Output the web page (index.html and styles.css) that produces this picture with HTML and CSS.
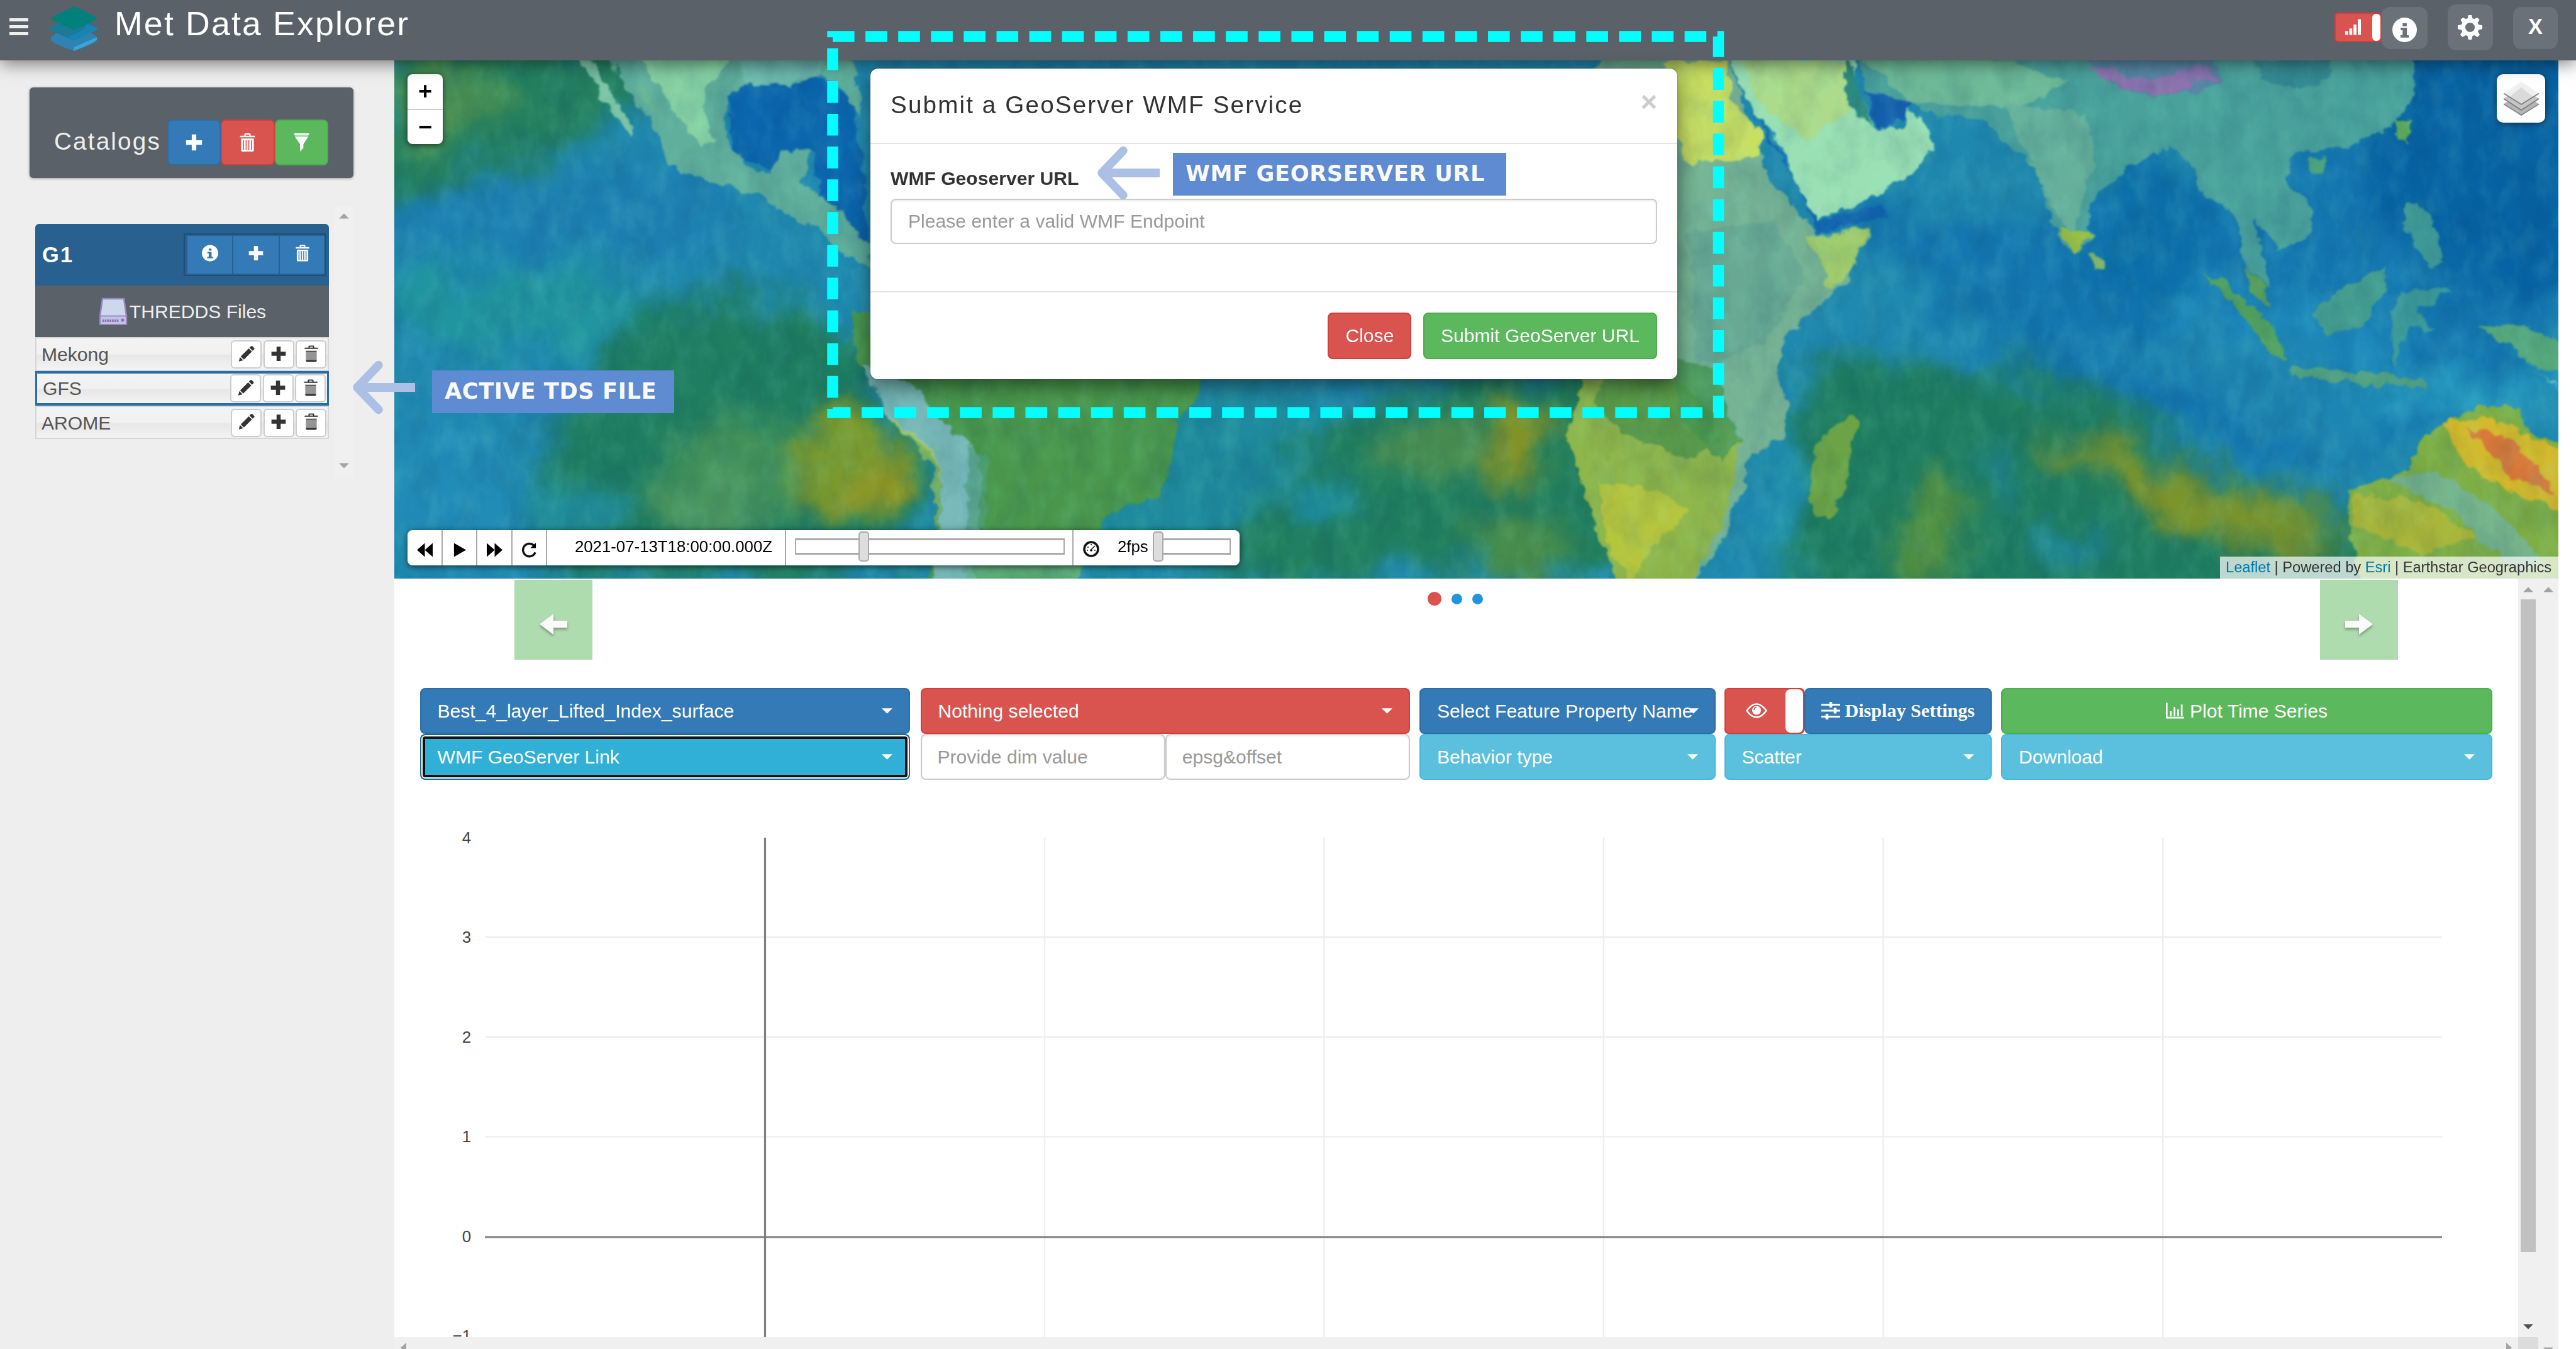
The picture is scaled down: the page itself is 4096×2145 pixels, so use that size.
FILE: index.html
```html
<!DOCTYPE html>
<html lang="en">
<head>
<meta charset="utf-8">
<title>Met Data Explorer</title>
<link rel="stylesheet" href="styles.css">
</head>
<body>
<svg class="sprite" width="0" height="0">
  <symbol id="i-plus" viewBox="0 0 16 16"><path d="M6 1h4v5h5v4h-5v5H6v-5H1V6h5z"/></symbol>
  <symbol id="i-trash" viewBox="0 0 16 16"><path fill-rule="evenodd" d="M5.2 2V.9Q5.200 0 6 0h4q.8 0 .8.900V2H14q.6 0 .6.600V3.500H1.400V2.600Q1.400 2 2 2zM6.400 2h3.200V1.100H6.400zM2.400 4.600h11.200V15q0 1-1 1H3.400q-1 0-1-1zM4.100 6v8.600h.9V6zm2.300 0v8.600h.9V6zm2.300 0v8.600h.9V6zm2.300 0v8.600h.9V6z"/></symbol>
  <symbol id="i-bin" viewBox="0 0 16 16"><path fill-rule="evenodd" d="M5.200 2V.9Q5.200 0 6 0h4q.8 0 .8.900V2H14q.6 0 .6.600V3.300H1.400V2.600Q1.400 2 2 2zM6.400 2h3.200V1.100H6.400z"/><path d="M2.700 5h10.600v1H2.700zM2.700 14h10.600v.8q0 1.200-1.100 1.200H3.800q-1.100 0-1.100-1.200z"/><path opacity=".52" d="M2.700 6h10.600v8H2.700z"/></symbol>
  <symbol id="i-filter" viewBox="0 0 16 16"><path d="M1.500 0h13v1.200h-13z"/><path opacity=".5" d="M1.700 1.200h12.600L13.600 3H2.400z"/><path d="M2.200 3h11.600L9.600 9.500V13L6.600 16V9.500z"/></symbol>
  <symbol id="i-info" viewBox="0 0 16 16"><path fill-rule="evenodd" d="M8 0a8 8 0 1 1 0 16A8 8 0 0 1 8 0zM6.700 3.600v2h2.700v-2zM5.400 6.700v1.500h1.300v3.300H5.300V13h5.500v-1.500H9.500V6.700z"/></symbol>
  <symbol id="i-pencil" viewBox="0 0 16 16"><path d="M12.300.6q.7-.7 1.400 0l1.700 1.700q.7.700 0 1.400L14 5.100 10.900 2zM10.200 2.700l3.100 3.100-7.900 7.900-3.100-3.100zM1.600 11.300l3.100 3.100L.5 15.500z"/></symbol>
  <symbol id="i-gear" viewBox="0 0 16 16"><path fill-rule="evenodd" d="M6.900 0h2.200l.4 2.100 1.300.5L12.600 1.500l1.600 1.600-1.200 1.900.5 1.200 2.500.5v2.400l-2.400.5-.5 1.200 1.300 2-1.600 1.600-2-1.300-1.200.5L9.100 16H6.900l-.5-2.400-1.200-.5-2 1.300-1.600-1.600 1.300-2-.5-1.200L0 9.100V6.700l2.500-.5.500-1.200-1.200-1.900 1.600-1.600 1.800 1.100 1.300-.5zM8 4.900a3.100 3.100 0 1 0 0 6.200 3.100 3.100 0 0 0 0-6.200z"/></symbol>
  <symbol id="i-signal" viewBox="0 0 16 16"><path d="M0 12h3v4H0zM4.200 9.500h3V16h-3zM8.500 5.500h3V16h-3zM12.800 0H16v16h-3.200z"/></symbol>
  <symbol id="i-caret" viewBox="0 0 16 8"><path d="M0 0h16L8 8z"/></symbol>
  <symbol id="i-arrow" viewBox="0 0 44 33"><path d="M0 16.500L22 0v11h22v11H22v11z"/></symbol>
  <symbol id="i-callout" viewBox="0 0 101 86"><path d="M14 43H101" fill="none" stroke="#abc0e4" stroke-width="14"/><path d="M43 7.500L9 43l34 35.500" fill="none" stroke="#abc0e4" stroke-width="13.500" stroke-linecap="round" stroke-linejoin="round"/></symbol>
</svg>

<header class="topbar">
  <div class="burger"><span></span><span></span><span></span></div>
  <svg class="logo" viewBox="0 0 80 72">
    <path d="M3 50q0-2 37-25 37 23 37 25v5q-3 5-37 17Q6 60 3 55z" fill="#2e83b3"/>
    <path d="M77 50v4Q70 60 40 72v-6z" fill="#37a6dc"/>
    <path d="M0 36q2-3 40-22 37 19 39 22-2 3-39 19Q3 40 0 36z" fill="#1a7a97"/>
    <path d="M60 28q18 6 19 8-1 3-39 19l-10-6q32-10 30-21z" fill="#158abd" opacity=".75"/>
    <path d="M3 19Q5 16 40 0q34 15 37 19-2 5-37 19Q6 24 3 19z" fill="#02807c"/>
  </svg>
  <h1 class="brand">Met Data Explorer</h1>
  <div class="tools">
    <div class="toggle toggle-sm"><svg class="ic-signal"><use href="#i-signal"/></svg><i></i></div>
    <button class="tool"><svg class="ic-38 low"><use href="#i-info"/></svg></button>
    <button class="tool tool-gear"><svg class="ic-38"><use href="#i-gear"/></svg></button>
    <button class="tool tool-x">X</button>
  </div>
</header>

<div class="layout">
  <aside class="sidebar">
    <div class="catalogs">
      <span>Catalogs</span>
      <div class="cat-buttons">
        <button class="sq primary"><svg><use href="#i-plus"/></svg></button><button class="sq danger"><svg><use href="#i-trash"/></svg></button><button class="sq success"><svg><use href="#i-filter"/></svg></button>
      </div>
    </div>
    <div class="tree">
      <div class="group">
        <div class="group-head"><b>G1</b>
          <div class="group-buttons"><button><svg><use href="#i-info"/></svg></button><button><svg><use href="#i-plus"/></svg></button><button><svg><use href="#i-trash"/></svg></button></div>
        </div>
        <div class="group-sub">
          <svg class="drive" viewBox="0 0 46 44"><path d="M6 2h34l4 27v14H2V29z" fill="#ccd8ee" stroke="#9a85bd" stroke-width="2.500"/><path d="M2 29.500h42" stroke="#9a85bd" stroke-width="2"/><path d="M3.500 31h39v11h-39z" fill="#bfc3e6"/><path d="M6 37h26" stroke="#8a6fae" stroke-width="4" stroke-dasharray="2.500 1.300"/><circle cx="38" cy="36" r="2.500" fill="#8a6fae"/></svg>
          <span>THREDDS Files</span>
        </div>
        <div class="file"><span>Mekong</span><button><svg><use href="#i-pencil"/></svg></button><button><svg><use href="#i-plus"/></svg></button><button><svg><use href="#i-bin"/></svg></button></div>
        <div class="file active"><span>GFS</span><button><svg><use href="#i-pencil"/></svg></button><button><svg><use href="#i-plus"/></svg></button><button><svg><use href="#i-bin"/></svg></button></div>
        <div class="file"><span>AROME</span><button><svg><use href="#i-pencil"/></svg></button><button><svg><use href="#i-plus"/></svg></button><button><svg><use href="#i-bin"/></svg></button></div>
      </div>
      <div class="vbar"><svg class="up"><use href="#i-caret"/></svg><svg><use href="#i-caret"/></svg></div>
    </div>
  </aside>

  <main class="content">
    <section class="map">
      <svg class="world" viewBox="240 37 1317.500 315.500" preserveAspectRatio="none">
        <defs>
          <filter id="b10" color-interpolation-filters="sRGB" x="-50%" y="-50%" width="200%" height="200%"><feGaussianBlur stdDeviation="8"/></filter>
          <filter id="warp" color-interpolation-filters="sRGB" filterUnits="userSpaceOnUse" x="220" y="20" width="1360" height="350"><feTurbulence type="fractalNoise" baseFrequency="0.022" numOctaves="6" seed="7" result="n"/><feDisplacementMap in="SourceGraphic" in2="n" scale="44" xChannelSelector="R" yChannelSelector="G"/></filter>
          <filter id="coast" color-interpolation-filters="sRGB" filterUnits="userSpaceOnUse" x="220" y="20" width="1360" height="350"><feTurbulence type="fractalNoise" baseFrequency="0.120" numOctaves="4" seed="3" result="n"/><feDisplacementMap in="SourceGraphic" in2="n" scale="8" xChannelSelector="R" yChannelSelector="G"/><feGaussianBlur stdDeviation="0.700"/></filter>
          <filter id="grain" color-interpolation-filters="sRGB" filterUnits="userSpaceOnUse" x="240" y="37" width="1318" height="316"><feTurbulence type="fractalNoise" baseFrequency="0.090 0.050" numOctaves="5" seed="12"/><feColorMatrix values="0 0 0 0 .6  0 0 0 0 1  0 0 0 0 .85  1.500 0 0 0 -0.600"/></filter>
          <filter id="grain2" color-interpolation-filters="sRGB" filterUnits="userSpaceOnUse" x="240" y="37" width="1318" height="316"><feTurbulence type="fractalNoise" baseFrequency="0.060 0.040" numOctaves="5" seed="31"/><feColorMatrix values="0 0 0 0 0  0 0 0 0 0.200  0 0 0 0 0.350  0 1.500 0 0 -0.600"/></filter>
        </defs>
        <rect x="220" y="17" width="1360" height="356" fill="#1c86a8"/>
        <g filter="url(#warp)">
          <rect x="200" y="0" width="1400" height="400" fill="#2089b0"/>
          <g filter="url(#b10)">
            <path d="M230 20H400L385 70 330 95 290 105 230 130z" fill="#247f5f"/>
            <ellipse cx="270" cy="60" rx="32" ry="24" fill="#4c9152"/>
            <ellipse cx="340" cy="130" rx="110" ry="28" fill="#1d80b2"/>
            <ellipse cx="320" cy="190" rx="80" ry="24" fill="#21949f"/>
            <path d="M400 185L440 175 520 200 570 290 540 352 330 352 330 260z" fill="#1f7d60"/>
            <ellipse cx="270" cy="300" rx="38" ry="45" fill="#228cb8"/>
            <ellipse cx="350" cy="310" rx="30" ry="20" fill="#218d9a"/>
            <ellipse cx="455" cy="280" rx="50" ry="32" fill="#43915a"/>
            <ellipse cx="430" cy="312" rx="38" ry="18" fill="#4b9560"/>
            <ellipse cx="520" cy="285" rx="32" ry="38" fill="#7b992e"/>
            <ellipse cx="532" cy="298" rx="14" ry="14" fill="#949624"/>
            <path d="M560 352l20-60 140-60 90 10 30 110z" fill="#1f8a9d"/>
            <path d="M740 352l40-80 90-40 110-10 20 132z" fill="#217e5e"/>
            <ellipse cx="880" cy="270" rx="40" ry="18" fill="#4b8e50"/>
            <ellipse cx="926" cy="268" rx="18" ry="25" fill="#859225"/>
            <ellipse cx="800" cy="300" rx="28" ry="16" fill="#1e8d9c"/>
            <ellipse cx="925" cy="335" rx="35" ry="20" fill="#4d8f4a"/>
            <path d="M1100 110l250 0 210-90 20 160-80 80-100 30-160-50z" fill="#1477b0"/>
            <path d="M1440 20h140v150l-60 20-70-50z" fill="#0863a4"/>
            <ellipse cx="1200" cy="110" rx="60" ry="30" fill="#1f87ae"/>
            <ellipse cx="1310" cy="150" rx="35" ry="55" fill="#0d70aa"/>
            <ellipse cx="1390" cy="205" rx="80" ry="30" fill="#1d88bc"/>
            <path d="M1100 215l100 5 70 15 60 45 110 35 10 62H1090z" fill="#1f7d60"/>
            <path d="M1250 212l70 20 110 55 20-20-50-60z" fill="#1e85b1"/>
            <path d="M1240 260l70 22 115 36-20 16-85-8z" fill="#7d942b"/>
            <ellipse cx="1175" cy="325" rx="22" ry="35" fill="#529143"/>
            <ellipse cx="1217" cy="290" rx="7" ry="18" fill="#20879c"/>
            <ellipse cx="1260" cy="335" rx="20" ry="12" fill="#21899a"/>
            <ellipse cx="1085" cy="310" rx="14" ry="50" fill="#2190ab"/>
            <ellipse cx="1500" cy="240" rx="70" ry="16" fill="#2598c0"/>
          </g>
        </g>
        <g filter="url(#coast)">
          <g transform="translate(236.500 36.800) scale(.352 .2045)">
            <path d="M590 100L640 50 750 50 800 120 820 300 830 560 760 500 740 330 730 260 680 270 660 330 600 280z" fill="#0c66ae"/>
            <path d="M330 0L350 60 375 130 420 225 428 205 400 150 368 60 352 0z" fill="#7cc4a6"/>
            <path d="M375 -20L440 150 470 230 480 310 540 350 600 385 640 405 700 470 745 500 770 560 830 620 835 560 775 440 745 400 715 370 730 265 680 270 660 330 640 345 600 270 580 200 590 110 620 70 700 70 750 40 790 100 812 170 818 120 800 -20z" fill="#60ae9c"/>
            <path d="M600 -20L760 -20 745 40 690 68 620 68z" fill="#6fb9ae"/>
            <path d="M430 -20L480 120 520 210 545 270 560 240 540 140 560 60 600 -20z" fill="#8fd8a6" opacity=".85"/>
            <path d="M430 60L470 170 500 230 450 130z" fill="#9abe3c" opacity=".5"/>
            <path d="M800 750L805 880 840 960 870 1080 940 1180 952 1250 945 1380 935 1560 1180 1560 1210 1500 1240 1350 1330 1300 1350 1240 1365 1060 1400 1000 1410 920 1400 700z" fill="#4a974c"/>
            <path d="M820 900L860 1060 940 1170 955 1260 945 1560 1010 1560 1025 1280 1020 1170 960 1080 900 960z" fill="#78b8b8"/>
            <path d="M990 1470L1000 1560 1190 1560 1215 1440 1090 1430z" fill="#62b08b" opacity=".65"/>
            <path d="M1000 1150L1040 1190 1030 1400 1000 1400z" fill="#4f9f7c" opacity=".7"/>
            <path d="M860 1050L945 1165 955 1250 948 1400 940 1200z" fill="#c6d648" opacity=".5"/>
          </g>
          <g transform="translate(775.300 36.800) scale(.5055 .2179)">
            <path d="M400 -40L545 -40 560 90 590 300 610 370 640 440 655 490 715 465 715 500 690 620 640 720 615 790 605 880 620 960 615 1060 565 1120 570 1200 555 1240 545 1330 500 1480 415 1480 385 1280 380 1150 355 1060 370 890 380 700 300 500z" fill="#76b294"/>
            <path d="M470 0L545 0 555 120 590 210 580 270 500 290 480 200z" fill="#c9df62"/>
            <path d="M370 890L480 880 520 960 560 1060 550 1240 500 1480 415 1480 385 1280 355 1060z" fill="#8fb64b"/>
            <path d="M400 880L480 880 520 960 540 1060 500 1120 420 1040 385 960z" fill="#5a9a48"/>
            <path d="M480 840L530 860 560 1060 540 1130 490 1000z" fill="#469550" opacity=".8"/>
            <path d="M390 1180L460 1200 500 1260 460 1350 430 1446 405 1380z" fill="#c4cc39" opacity=".7"/>
            <path d="M500 480L600 450 640 600 590 800 510 850z" fill="#5b9f92" opacity=".5"/>
            <path d="M640 500L715 465 700 580 665 650 660 560z" fill="#a2cc6c"/>
            <path d="M545 -40L565 100 605 210 650 450 720 385 770 320 797 230 765 130 760 185 722 190 700 60 700 -40z" fill="#9be0b4"/>
            <path d="M560 0L690 0 700 130 640 230 590 130z" fill="#b2d97f" opacity=".8"/>
            <path d="M690 -20L720 190 690 110z" fill="#2c8b80"/>
            <path d="M565 100L605 230 648 440 655 485 740 440 735 400 655 450 615 290 580 150z" fill="#1265b0"/>
            <path d="M700 -40L715 90 770 120 800 165 855 160 880 230 915 300 930 400 950 510 965 545 985 500 985 380 1040 290 1060 250 1090 250 1110 310 1120 380 1145 400 1160 450 1167 560 1200 640 1180 440 1213 535 1250 480 1250 420 1220 330 1230 260 1290 240 1340 200 1372 100 1378 -40z" fill="#4aa19c"/>
            <path d="M700 -20L880 0 960 60 900 130 770 120z" fill="#83c896" opacity=".65"/>
            <path d="M880 120L980 150 990 290 960 500 930 380z" fill="#70b69b" opacity=".75"/>
            <path d="M715 90L770 120 760 165 725 190 718 130z" fill="#1660b0"/>
            <path d="M970 -20L1130 -20 1145 70 1100 90 1060 100 1010 70z" fill="#5a80a6" opacity=".85"/>
            <path d="M975 20L1015 70 1060 98 1100 85 1110 50 1142 65 1120 10 1085 40 1050 55 1010 25z" fill="#b168b8" opacity=".6"/>
            <path d="M1180 0L1280 0 1260 70 1200 70z" fill="#22778b" opacity=".5"/>
            <path d="M985 540L1000 560 998 590 985 585z" fill="#82b768"/>
            <path d="M945 470L965 545 985 480z" fill="#98be46"/>
            <path d="M1120 590L1145 620 1200 730 1220 840 1200 820 1165 710z" fill="#52a15f"/>
            <path d="M1170 570L1195 630 1200 690 1178 650z" fill="#5ba35c"/>
            <path d="M1250 710L1280 650 1335 580 1340 640 1310 740 1270 770z" fill="#459e90"/>
            <path d="M1222 855L1300 870 1390 895 1385 915 1290 900 1225 880z" fill="#5ca778" opacity=".85"/>
            <path d="M1365 390L1395 430 1410 560 1395 590 1375 520 1360 460z" fill="#4ca592" opacity=".8"/>
            <path d="M1350 160L1370 170 1365 230 1352 220z" fill="#5fae5a"/>
            <path d="M1248 270L1268 265 1265 310 1250 320z" fill="#4aa07a"/>
            <path d="M1360 650L1420 640 1380 700 1400 760 1370 740 1350 860 1345 700z" fill="#45a092" opacity=".8"/>
            <path d="M1450 745L1500 740 1560 800 1560 880 1520 860 1480 790z" fill="#56a77c"/>
            <path d="M650 1080L695 985 706 1010 690 1180 670 1285 648 1260z" fill="#6ba346"/>
            <path d="M1295 1200L1365 1150 1385 1050 1420 1010 1450 965 1500 970 1510 1040 1560 1080 1560 1460 1310 1460 1295 1300z" fill="#7fae45"/>
            <path d="M1340 1170L1400 1150 1470 1250 1530 1400 1500 1440 1420 1260z" fill="#75b49c" opacity=".8"/>
            <path d="M1300 1210L1380 1230 1450 1330 1380 1380 1300 1300z" fill="#a9b63a"/>
            <path d="M1410 1010L1470 1000 1520 1060 1560 1100 1560 1260 1480 1200 1430 1120z" fill="#d3b92c"/>
            <path d="M1435 1030L1480 1050 1520 1130 1545 1220 1490 1160z" fill="#d9793a"/>
            <path d="M1515 870L1540 900 1552 920 1530 890z" fill="#9cd3d0"/>
          </g>
        </g>
        <rect x="240" y="37" width="1318" height="316" filter="url(#grain)" opacity=".15"/>
        <rect x="240" y="37" width="1318" height="316" filter="url(#grain2)" opacity=".17"/>
      </svg>
      <div class="zoom"><b>+</b><b>−</b></div>
      <div class="layers"><svg viewBox="0 0 56 54"><path d="M0 35.500L28 16l28 19.500L28 54z" fill="#b5b5b5"/><path d="M0 35.500L28 53l28-17.500" fill="none" stroke="#858585" stroke-width="1.500"/><path d="M0 27L28 8l28 19-28 18.500z" fill="#c6c6c6"/><path d="M0 27l28 18 28-18" fill="none" stroke="#7c7c7c" stroke-width="1.500"/><path d="M0 18.500L28 0l28 18.500-28 18z" fill="#f0f0f0"/><path d="M9 24L28 9l19 15-19 12.500z" fill="#dadada"/><path d="M0 18.500L28 36l28-17.500" fill="none" stroke="#7c7c7c" stroke-width="1.500"/></svg></div>
      <div class="player">
        <span class="pb"><svg viewBox="0 0 26 23"><path d="M13 0v23L0 11.500zM26 0v23L13 11.500z"/></svg></span>
        <span class="pb"><svg viewBox="0 0 26 23"><path d="M4 0l20 11.500L4 23z"/></svg></span>
        <span class="pb"><svg viewBox="0 0 26 23"><path d="M0 0l13 11.500L0 23zM13 0l13 11.500L13 23z"/></svg></span>
        <span class="pb"><svg viewBox="0 0 26 26"><path d="M20.500 5.500A10.500 10.500 0 1 0 23 17" fill="none" stroke="#111" stroke-width="3.500"/><path d="M24 1v9h-9z"/></svg></span>
        <span class="stamp">2021-07-13T18:00:00.000Z</span>
        <span class="seek"><span class="track"><i></i></span></span>
        <span class="speed"><svg viewBox="0 0 26 26"><circle cx="13" cy="13" r="11" fill="none" stroke="#111" stroke-width="3.500"/><circle cx="13" cy="15" r="1.800"/><path d="M12 15l7-7" stroke="#111" stroke-width="1.500"/><path d="M7 10h2M12 6h2M6 15h2M18 15h2" stroke="#111" stroke-width="1.500"/></svg><em>2fps</em><span class="track short"><i></i></span></span>
      </div>
      <div class="credit"><a>Leaflet</a> | Powered by <a>Esri</a> | Earthstar Geographics</div>
    </section>

    <section class="panel">
      <div class="pane">
        <nav class="slides">
          <button><svg><use href="#i-arrow"/></svg></button>
          <div class="dots"><i class="on"></i><i></i><i></i></div>
          <button><svg class="flip"><use href="#i-arrow"/></svg></button>
        </nav>
        <div class="controls">
          <div class="btn primary">Best_4_layer_Lifted_Index_surface<svg class="caret"><use href="#i-caret"/></svg></div>
          <div class="btn danger">Nothing selected<svg class="caret"><use href="#i-caret"/></svg></div>
          <div class="btn primary">Select Feature Property Name<svg class="caret over"><use href="#i-caret"/></svg></div>
          <div class="pair">
            <div class="toggle toggle-lg"><svg class="eye" viewBox="0 0 34 24"><path d="M1.500 12Q9 1.500 17 1.500T32.500 12Q25 22.500 17 22.500T1.500 12z" fill="none" stroke="#fff" stroke-width="2.600"/><circle cx="17" cy="11.500" r="7" fill="#fff"/><path d="M13 11a4.500 4.500 0 0 1 4-4.500" fill="none" stroke="#d9534f" stroke-width="1.500"/></svg><i></i></div>
            <div class="btn primary serif"><svg class="sliders" viewBox="0 0 30 28"><path d="M0 4.500h30M0 14h30M0 23.500h30" stroke="#fff" stroke-width="3.200"/><path d="M15 0v9M22 9.500v9M9 19v9" stroke="#fff" stroke-width="4.500"/></svg>Display Settings</div>
          </div>
          <div class="btn success center"><svg class="chart-ic" viewBox="0 0 30 26"><path d="M1.300 0v24.500H30M8 22v-8M14 22V7M20 22V11M26 22V3" fill="none" stroke="#fff" stroke-width="2.800"/></svg>Plot Time Series</div>

          <div class="btn focus">WMF GeoServer Link<svg class="caret"><use href="#i-caret"/></svg></div>
          <div class="pair"><div class="field">Provide dim value</div><div class="field">epsg&amp;offset</div></div>
          <div class="btn info">Behavior type<svg class="caret"><use href="#i-caret"/></svg></div>
          <div class="btn info">Scatter<svg class="caret"><use href="#i-caret"/></svg></div>
          <div class="btn info">Download<svg class="caret"><use href="#i-caret"/></svg></div>
        </div>
        <svg class="chart" viewBox="627 1240 3377 886">
          <path d="M771 1490H3883M771 1649H3883M771 1807.500H3883M1661 1332V2126M2105.500 1332V2126M2550 1332V2126M2994.500 1332V2126M3439 1332V2126" stroke="#eee" stroke-width="2.400"/>
          <path d="M771 1967H3883M1216.500 1332V2126" stroke="#7f7f7f" stroke-width="3.200"/>
          <g class="ticks"><text x="749" y="1341">4</text><text x="749" y="1499">3</text><text x="749" y="1658">2</text><text x="749" y="1816">1</text><text x="749" y="1975">0</text><text x="749" y="2133">−1</text></g>
        </svg>
      </div>
      <div class="inner-bar"><svg class="up"><use href="#i-caret"/></svg><div class="thumb"></div><svg class="dark"><use href="#i-caret"/></svg></div>
      <div class="outer-bar"><svg class="up"><use href="#i-caret"/></svg><svg><use href="#i-caret"/></svg></div>
      <div class="h-bar"><svg viewBox="0 0 9 16"><path d="M9 0v16L0 8z"/></svg><svg viewBox="0 0 9 16"><path d="M0 0v16l9-8z"/></svg></div>
      <div class="corner"></div>
    </section>
  </main>
</div>

<div class="modal">
  <div class="modal-head"><h4>Submit a GeoServer WMF Service</h4><b>×</b></div>
  <div class="modal-body"><label>WMF Geoserver URL</label><div class="field">Please enter a valid WMF Endpoint</div></div>
  <div class="modal-foot"><button class="danger">Close</button><button class="success">Submit GeoServer URL</button></div>
</div>

<svg class="marquee" viewBox="0 0 1428 618"><rect x="10" y="10" width="1408.500" height="598" fill="none" stroke="#0ff" stroke-width="17.500" stroke-dasharray="34.600 17.500"/></svg>
<svg class="callout c1"><use href="#i-callout"/></svg>
<div class="note n1">ACTIVE TDS FILE</div>
<svg class="callout c2"><use href="#i-callout"/></svg>
<div class="note n2">WMF GEORSERVER URL</div>
</body>
</html>
```
FILE: styles.css
```css
* { box-sizing: border-box; }
html, body { margin: 0; height: 100%; }
body {
  position: relative;
  width: 4096px;
  height: 2145px;
  overflow: hidden;
  display: flex;
  flex-direction: column;
  background: #fff;
  color: #333;
  font: 30.1px/43px "Liberation Sans", Arial, sans-serif;
}
button { margin: 0; padding: 0; border: 0; font: inherit; color: inherit; background: none; }
svg { display: block; fill: currentColor; flex: none; }
.sprite { position: absolute; }

.primary { background: #337ab7; border: 2px solid #2e6da4; color: #fff; }
.danger { background: #d9534f; border: 2px solid #d43f3a; color: #fff; }
.success { background: #5cb85c; border: 2px solid #4cae4c; color: #fff; }
.info { background: #5bc0de; border: 2px solid #46b8da; color: #fff; }

/* top bar */
.topbar {
  position: relative;
  z-index: 2;
  flex: none;
  height: 96px;
  display: flex;
  align-items: flex-start;
  background: #5a6168;
  color: #fff;
  box-shadow: 0 5px 26px rgba(0, 0, 0, .5);
}
.burger { width: 78px; padding: 29px 33px 0 15px; display: grid; gap: 6px; }
.burger span { height: 5px; background: #eee; }
.logo { width: 79px; height: 71px; margin-top: 10px; }
.brand { margin: 0 0 0 25px; font-weight: 400; font-size: 53.7px; line-height: 74px; letter-spacing: 2.15px; }
.tools { margin-left: auto; width: 384px; display: flex; align-items: flex-start; }
.toggle { display: flex; align-items: center; background: #d9534f; border: 2px solid #d43f3a; border-radius: 6px; color: #fff; }
.toggle i { display: block; background: #fff; border-radius: 6px; margin-left: auto; }
.toggle-sm { width: 75px; height: 47px; margin-top: 19.500px; padding-left: 15px; }
.toggle-sm i { width: 13px; height: 43px; }
.ic-signal { width: 25px; height: 26px; }
.tool { width: 72.500px; height: 66.500px; margin-top: 11px; border-radius: 13px; background: #6a7178; display: flex; align-items: center; justify-content: center; }
.tool-gear { height: 73px; margin: 6.500px 32px 0; }
.tool-x { width: 71px; font-weight: 700; font-size: 34.4px; padding-bottom: 3px; }
.ic-38 { width: 39px; height: 39px; }
.low { margin-top: 6px; }

.layout { flex: 1; display: flex; min-height: 0; }

/* sidebar */
.sidebar { width: 627px; flex: none; background: #eee; padding: 43px 65px 0 47px; }
.catalogs {
  height: 144px;
  padding: 51px 40px 0 39px;
  display: flex;
  background: #5a6168;
  border-radius: 6px;
  box-shadow: 0 1px 4px rgba(0, 0, 0, .35);
  color: #eee;
  font-size: 38.7px;
  letter-spacing: 2.15px;
  line-height: 70px;
}
.cat-buttons { display: flex; margin-left: auto; }
.sq { width: 85.500px; height: 73px; border-radius: 8px; display: flex; align-items: center; justify-content: center; }
.sq svg { width: 29px; height: 31px; }
.tree { display: flex; justify-content: space-between; margin-top: 44px; height: 431px; padding-left: 9px; }
.group { width: 467px; margin-top: 29px; }
.group-head { height: 98px; display: flex; align-items: center; padding: 0 5px 0 11px; background: #286090; border-radius: 6px 6px 0 0; color: #fff; font-size: 34.4px; letter-spacing: 2.15px; }
.group-buttons { margin-left: auto; width: 226px; height: 68px; padding: 2px 0 2px 4px; display: flex; gap: 2px; border: 2px solid #204d74; background: #28608f; }
.group-buttons button { flex: 1; background: #337ab7; display: flex; align-items: center; justify-content: center; padding: 0 0 6px 1px; }
.group-buttons svg { width: 26px; height: 27px; }
.group-sub { height: 82px; display: flex; align-items: center; justify-content: center; gap: 3px; background: #5a6168; color: #eee; padding-left: 1px; }
.drive { width: 46px; height: 44px; }
.file {
  height: 53.500px;
  display: flex;
  align-items: center;
  padding: 2px 2px 0 8px;
  border: 2px solid #d6d6d6;
  gap: 2.500px;
  background: linear-gradient(#f3f3f3 0, #f1f1f1 50%, #e7e7e7 54%, #f3f3f3 100%);
  color: #555;
}
.file span { flex: 1; }
.file button { width: 49px; height: 45px; background: #fff; border: 2px solid #ccc; border-radius: 6px; color: #333; display: flex; align-items: center; justify-content: center; padding-bottom: 3px; }
.file svg { width: 26px; height: 27px; }
.file.active { height: 55px; border: 4px solid #286da8; border-width: 4px 3px; padding: 1px 2px 0 9px; }
.vbar { width: 31px; background: #f0f0f0; color: #a3a3a3; display: flex; flex-direction: column; justify-content: space-between; align-items: center; padding: 12px 0 13px; }
.vbar svg, .outer-bar svg, .inner-bar svg { width: 16px; height: 9px; }
.up { transform: scaleY(-1); }

/* map */
.content { width: 3441px; flex: none; display: flex; flex-direction: column; }
.map { position: relative; height: 824px; flex: none; overflow: hidden; color: #000; }
.world { width: 3441px; height: 824px; }
.zoom, .layers, .player, .credit { position: absolute; background: #fff; }
.zoom { left: 21px; top: 22px; width: 56px; height: 111px; border-radius: 8px; box-shadow: 0 2px 11px rgba(0, 0, 0, .65); display: grid; grid-template-rows: 1fr 1fr; text-align: center; font-size: 38px; line-height: 54px; }
.zoom b + b { border-top: 2px solid #ccc; }
.layers { right: 21px; top: 22px; width: 77px; height: 77px; border-radius: 10px; box-shadow: 0 2px 11px rgba(0, 0, 0, .5); display: flex; align-items: center; justify-content: center; }
.layers svg { width: 56px; height: 54px; }
.player { left: 21px; bottom: 21px; width: 1323px; height: 56px; border-radius: 8px; box-shadow: 0 2px 11px rgba(0, 0, 0, .65); display: flex; font-size: 25.800px; line-height: 53px; }
.pb { width: 55.500px; border-right: 2px solid #aaa; display: flex; align-items: center; justify-content: center; padding: 6px 0 0 1px; }
.pb svg { width: 25px; height: 25px; }
.stamp { width: 380px; border-right: 2px solid #aaa; text-align: right; padding-right: 20px; }
.seek { width: 457px; border-right: 2px solid #aaa; padding: 13px 13px 0 14px; }
.track { display: block; width: 429px; height: 26px; border: 2px solid #aaa; border-width: 3px 2px; }
.track i { display: block; width: 17px; height: 48px; margin: -14px 0 0 99px; background: #ddd; border: 2px solid #aaa; border-radius: 5px; }
.speed { flex: 1; display: flex; padding: 13px 0 0 15px; }
.speed > svg { width: 26px; height: 28px; margin: 3px 29px 0 0; }
.speed em { font-style: normal; line-height: 27px; margin-right: 8px; width: 48px; }
.track.short { width: 124px; }
.short i { margin-left: -2px; }
.credit { right: 0; bottom: 0; height: 35px; width: 538px; padding-left: 9px; white-space: nowrap; background: rgba(255, 255, 255, .7); color: #333; font-size: 23.650px; line-height: 35px; }
.credit a { color: #0078a8; }

/* lower panel */
.panel { flex: 1; min-height: 0; display: grid; grid-template: 1205.500px 1fr / 3377px 32px 32px; overflow: hidden; }
.pane { overflow: hidden; }
.slides { display: flex; justify-content: space-between; padding: 2px 191px 0 190.500px; }
.slides button { width: 124.500px; height: 127px; background: #aedcae; display: flex; align-items: center; justify-content: center; color: #fafafa; padding-top: 14px; }
.slides svg { width: 44px; height: 33px; filter: drop-shadow(0 3px 2px rgba(0, 0, 0, .3)); }
.slides .flip { transform: scaleX(-1); }
.dots { display: flex; height: 60px; align-items: center; gap: 16px; margin-right: 3px; }
.dots i { width: 17px; height: 17px; border-radius: 50%; background: #2196dc; }
.dots .on { width: 22px; height: 22px; background: #d9534f; }
.controls { display: grid; grid-template-columns: 779.500px 779px 470.500px 425.500px 781px; grid-auto-rows: 73.300px; column-gap: 15px; padding: 44.500px 0 0 40.500px; }
.controls > :nth-child(5n+2) { margin-left: 1.500px; margin-right: -1px; }
.controls > :nth-child(5n+3) { margin-left: 1px; margin-right: -1px; }
.btn, .field { display: flex; align-items: center; border-radius: 8px; padding: 0 26px; white-space: nowrap; }
.caret { width: 17px; height: 9px; margin-left: auto; }
.over { margin-left: -7px; }
.center { justify-content: center; gap: 9px; }
.chart-ic { width: 29px; height: 26px; }
.pair { display: flex; }
.toggle-lg { width: 127px; padding-left: 32px; }
.toggle-lg i { width: 28px; height: 69px; border-radius: 8px; }
.eye { width: 34px; height: 24px; }
.serif { flex: 1; font-family: "Liberation Serif", "Times New Roman", serif; font-weight: 700; padding: 0 0 0 25px; gap: 8px; }
.sliders { width: 30px; height: 28px; }
.field { flex: 1; border: 2px solid #ccc; background: #fff; color: #999; box-shadow: inset 0 2px 3px rgba(0, 0, 0, .075); padding: 0 25px; }
.focus { color: #fff; background: #31b0d7; border: 2px solid #1b6d85; outline: 4px solid #111; outline-offset: -8px; box-shadow: inset 0 0 0 2.500px #fff; }
.chart { width: 3377px; height: 886px; }
.ticks { font-size: 25.800px; fill: #444; text-anchor: end; }

.inner-bar, .outer-bar { background: #f0f0f0; display: flex; flex-direction: column; align-items: center; color: #a3a3a3; padding-top: 12.500px; }
.inner-bar .thumb { width: 24px; height: 1038px; margin: 11px 0 114px; background: #c1c1c1; }
.dark { color: #505050; }
.outer-bar { grid-column: 3; grid-row: 1 / 3; justify-content: space-between; }
.h-bar { grid-column: 1; grid-row: 2; background: #f0f0f0; color: #a3a3a3; display: flex; justify-content: space-between; padding: 9px 10px 0; }
.h-bar svg { width: 9px; height: 16px; }
.corner { grid-column: 2; grid-row: 2; background: #dcdcdc; }

/* dialog */
.modal { position: absolute; z-index: 3; left: 1384px; top: 109px; width: 1283px; height: 494px; background: #fff; border-radius: 12px; box-shadow: 0 11px 32px rgba(0, 0, 0, .5), 0 0 0 1px rgba(0, 0, 0, .2); }
.modal-head { height: 120px; display: flex; justify-content: space-between; padding: 36px 32px 0; border-bottom: 2px solid #e5e5e5; }
.modal-head h4 { margin: 0; font-size: 38.700px; line-height: 44px; font-weight: 400; letter-spacing: 2.100px; }
.modal-head b { font-size: 45px; line-height: 34px; color: #ccc; }
.modal-body { height: 236px; padding: 33px 32px 0; border-bottom: 2px solid #e5e5e5; }
.modal-body label { display: block; height: 53.500px; font-weight: 700; line-height: 43px; }
.modal-body .field { height: 72.500px; padding-left: 26px; }
.modal-foot { display: flex; justify-content: flex-end; gap: 18.500px; padding: 32px 32px 0; }
.modal-foot button { height: 73.500px; padding: 0 26px; border-radius: 8px; }

/* annotations */
.marquee, .callout, .note { position: absolute; z-index: 4; }
.marquee { left: 1313.500px; top: 48px; width: 1428px; height: 618px; }
.callout { width: 101px; height: 86px; }
.c1 { left: 559px; top: 573px; }
.c2 { left: 1743px; top: 232px; }
.note { height: 68px; padding: 0 20px; background: #5e8bd2; color: #fafafa; font: 700 35.200px/66px "DejaVu Sans", sans-serif; letter-spacing: .6px; white-space: nowrap; }
.n1 { left: 687px; top: 588.500px; width: 385px; }
.n2 { left: 1865px; top: 243px; width: 530px; }
```
